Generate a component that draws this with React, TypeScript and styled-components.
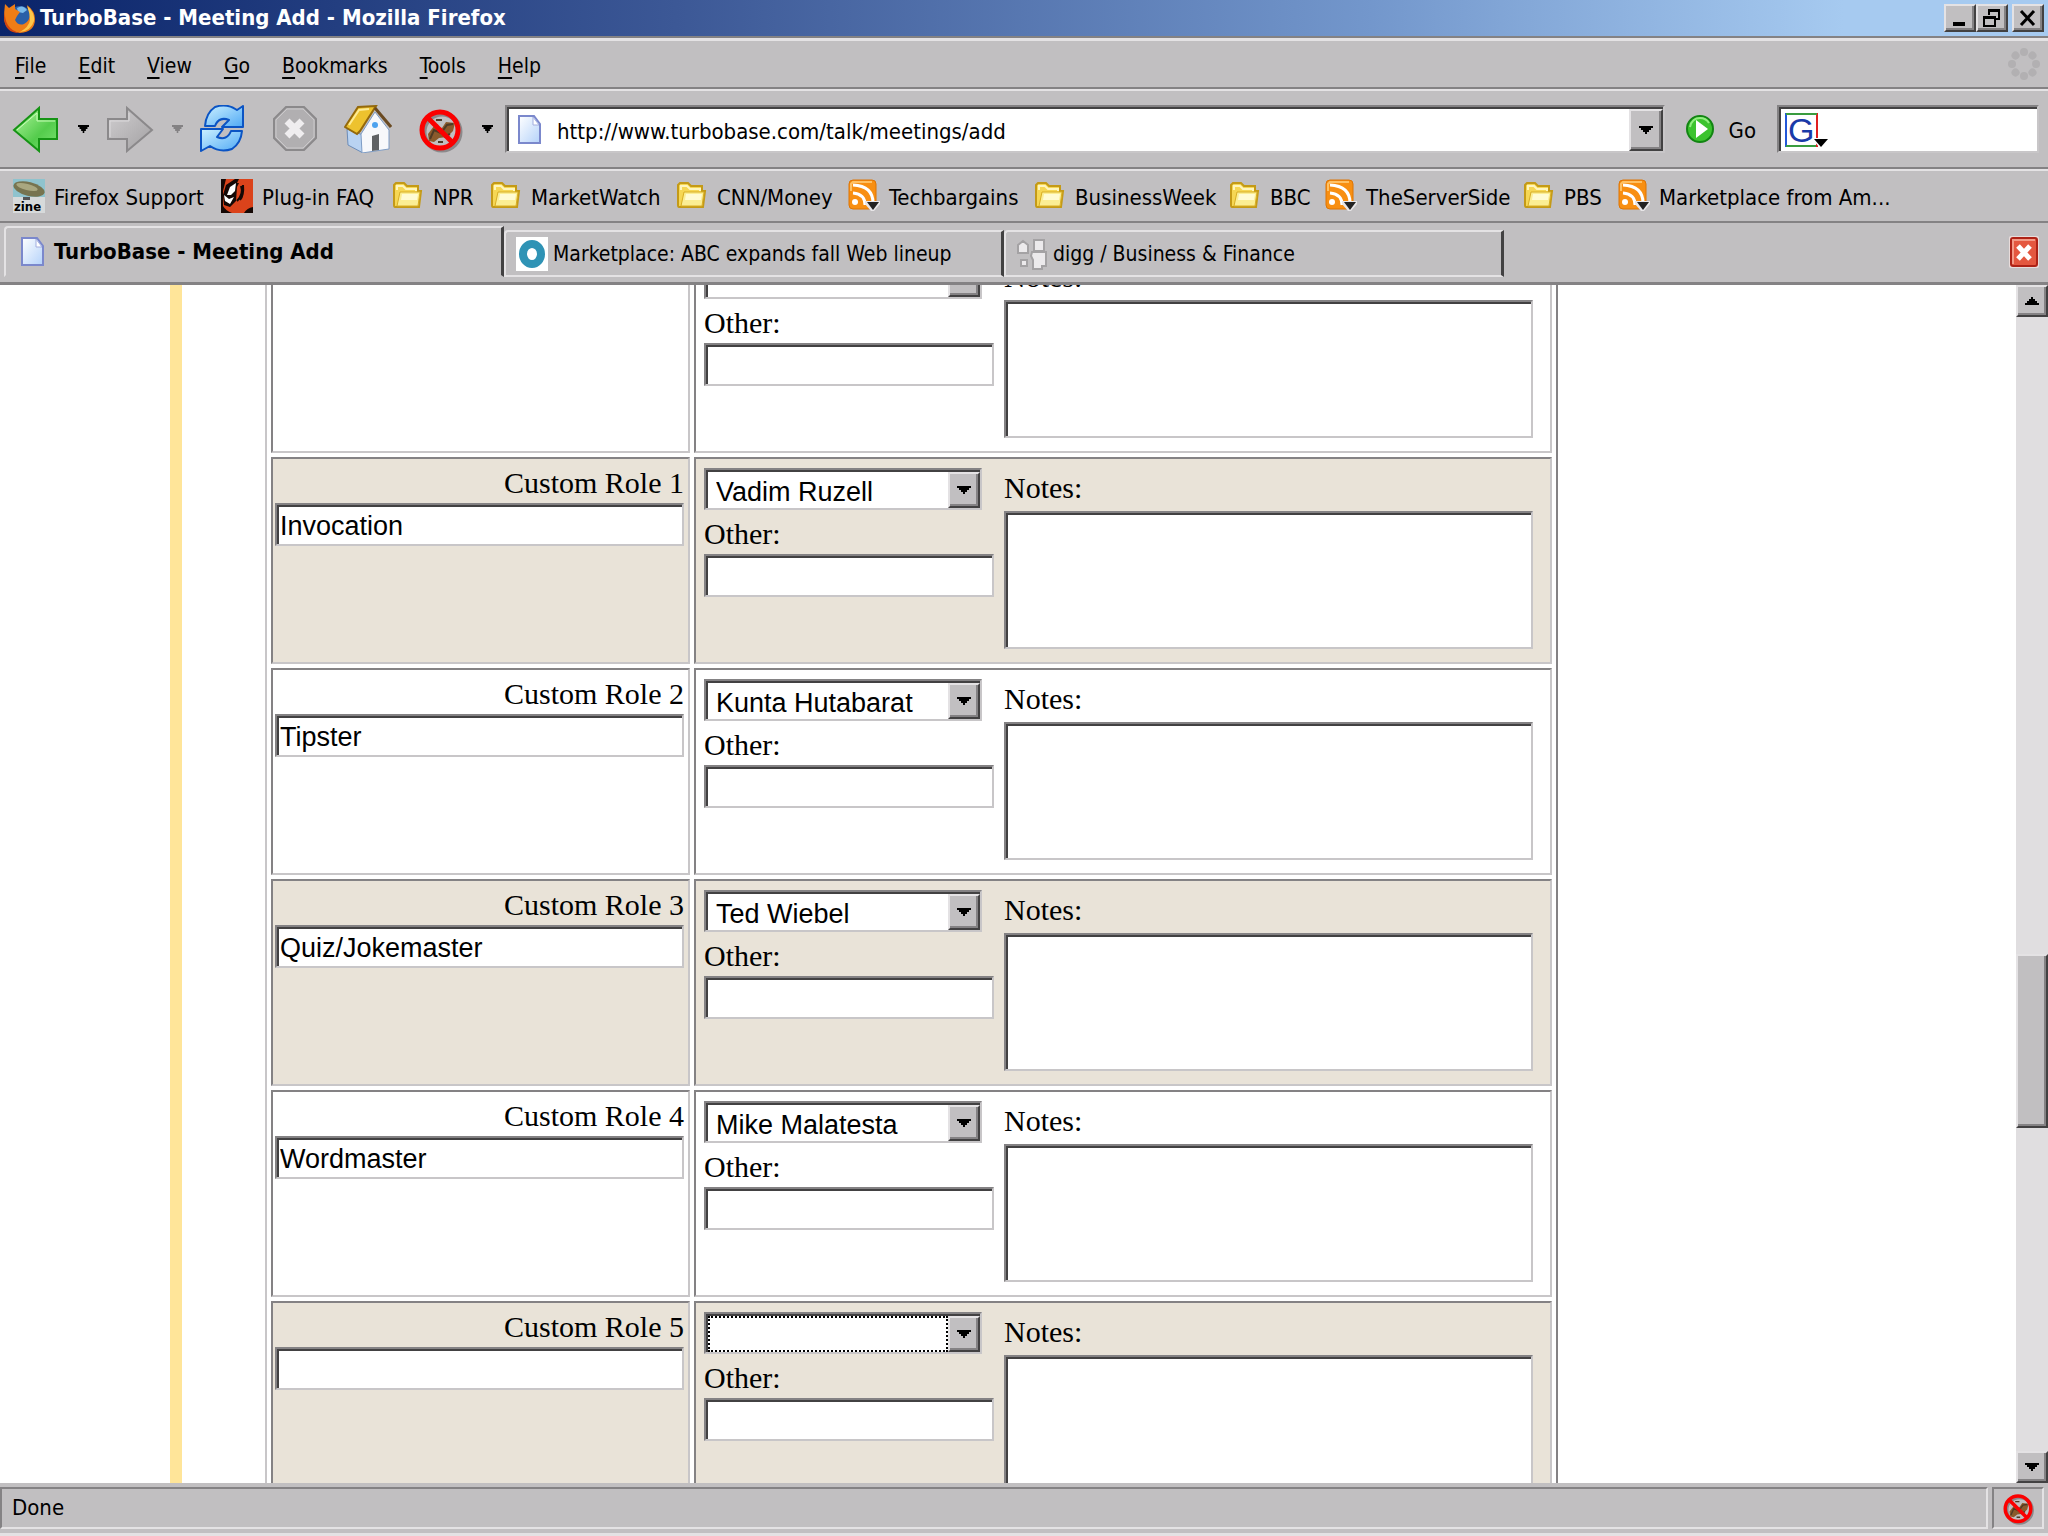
import React from "react";
import styled, { createGlobalStyle, css } from "styled-components";

const chrome = "#c1bfc1";
const light = "#e4e2e4";
const mid = "#848284";
const dark = "#424142";
const soft = "#c8c6c8";
const uiFont = `"DejaVu Sans Condensed", "Noto Sans", sans-serif`;
const serif = `"Liberation Serif", serif`;
const sans = `"Liberation Sans", sans-serif`;

const GlobalStyle = createGlobalStyle`
  * { box-sizing: border-box; }
  body { margin: 0; background: #fff; color: #000; overflow: hidden; }
  button, input, select, textarea { font: inherit; color: inherit; margin: 0; border-radius: 0; outline: none; }
  button { padding: 0; border: 0; background: none; }
  svg { display: block; flex: none; }
`;

const sunken = css`
  border: 2px solid;
  border-color: ${mid} ${soft} ${soft} ${mid};
  box-shadow: inset 2px 2px 0 ${dark};
  background: #fff;
`;
const raised = css`
  background: ${chrome};
  border: 2px solid;
  border-color: ${light} ${dark} ${dark} ${light};
  box-shadow: inset -2px -2px 0 ${mid};
`;

const Window = styled.div`
  display: flex;
  flex-direction: column;
  height: 100vh;
  background: ${chrome};
  font: 22px/28px ${uiFont};
`;
const TitleBar = styled.header`
  display: flex;
  align-items: center;
  height: 36px;
  padding: 0 4px;
  color: #fff;
  background: linear-gradient(90deg, #0a246a, #3c5896 33%, #7397cc 67%, #a6caf0 90%);
`;
const Title = styled.h1`
  flex: 1;
  margin: 0 0 0 4px;
  font-size: 22px;
  line-height: 36px;
`;
const WindowButton = styled.button`
  ${raised}
  display: grid;
  place-items: center;
  width: 32px;
  height: 28px;
  &:last-child { margin-left: 4px; }
`;
const Strip = styled.div`
  display: flex;
  align-items: center;
  border-top: 2px solid ${light};
  border-bottom: 2px solid ${mid};
`;
const MenuBar = styled(Strip).attrs({ as: "nav" })`
  height: 51px;
  margin-top: 2px;
  padding: 0 8px 0 15px;
  gap: 32px;
  border-top: 3px solid ${light};
  box-shadow: 0 -2px 0 ${mid};
`;
const MenuItem = styled.button`
  padding-top: 4px;
  font-size: 21px;
  text-underline-offset: 4px;
`;
const Spacer = styled.span`
  flex: 1;
`;
const NavBar = styled(Strip)`
  height: 80px;
  padding: 0 9px 0 12px;
`;
const PairRow = styled.div`
  display: flex;
  gap: 5px;
  margin-right: 5px;
`;
const IconRow = styled.div`
  display: flex;
  gap: 24px;
`;
const Pair = styled.div`
  display: flex;
`;
const ArrowButton = styled.button`
  display: flex;
  align-items: center;
  width: 41px;
  padding-left: 18px;
`;
const AddressBox = styled.form`
  ${sunken}
  flex: 1;
  display: flex;
  align-items: center;
  height: 48px;
  padding: 2px 0 0 10px;
`;
const AddressInput = styled.input`
  flex: 1;
  min-width: 0;
  height: 40px;
  padding: 2px 0 0 14px;
  border: 0;
  background: none;
`;
const DropButton = styled.button`
  ${raised}
  display: grid;
  place-items: center;
  width: 34px;
  height: 42px;
`;
const GoButton = styled.button`
  display: flex;
  align-items: center;
  gap: 12px;
  margin: 0 21px 0 20px;
`;
const GoText = styled.span`
  padding-top: 4px;
`;
const SearchBox = styled.label`
  ${sunken}
  display: flex;
  align-items: center;
  width: 262px;
  height: 48px;
  padding: 2px 0 0 6px;
`;
const SearchInput = styled.input`
  flex: 1;
  min-width: 0;
  border: 0;
  background: none;
`;
const BookmarkBar = styled(Strip)`
  height: 54px;
  padding: 0 13px;
  gap: 17px;
`;
const Bookmark = styled.a`
  display: flex;
  align-items: center;
  gap: 9px;
  color: inherit;
  text-decoration: none;
  white-space: nowrap;
`;
const BookmarkText = styled.span<{ $w: number }>`
  width: ${(p) => p.$w}px;
  padding-top: 4px;
`;
const TabBar = styled.div`
  display: flex;
  align-items: stretch;
  height: 62px;
  padding: 3px 9px 5px 4px;
  border-bottom: 3px solid ${mid};
`;
const Tab = styled.button<{ $active?: boolean }>`
  display: flex;
  align-items: center;
  gap: ${(p) => (p.$active ? 8 : 5)}px;
  width: 500px;
  margin-top: ${(p) => (p.$active ? 0 : 4)}px;
  padding: 0 0 0 ${(p) => (p.$active ? 14 : 10)}px;
  font-size: ${(p) => (p.$active ? 22 : 21)}px;
  font-weight: ${(p) => (p.$active ? 700 : 400)};
  text-align: left;
  white-space: nowrap;
  border-style: solid;
  border-width: 2px 3px 2px 2px;
  border-color: ${light} ${dark} ${(p) => (p.$active ? chrome : light)} ${light};
  border-top-left-radius: 4px;
`;
const CloseTab = styled.button`
  align-self: center;
`;
const Viewport = styled.div`
  flex: 1;
  min-height: 0;
  display: flex;
  background: #fff;
`;
const Page = styled.main`
  flex: 1;
  min-width: 0;
  overflow: hidden;
  margin-left: 170px;
  padding: 0 458px 0 83px;
  border-left: 12px solid #ffe599;
  font: 30px/40px ${serif};
`;
const RoleTable = styled.table`
  width: 100%;
  margin-top: -45px;
  table-layout: fixed;
  border-collapse: separate;
  border-spacing: 4px;
  border: 2px solid;
  border-color: ${soft} ${mid} ${mid} ${soft};
`;
const NameCol = styled.col`
  width: 419px;
`;
const Cell = styled.td<{ $pad: string; $shade: boolean }>`
  height: 207px;
  padding: ${(p) => p.$pad};
  vertical-align: top;
  border: 2px solid;
  border-color: ${mid} ${soft} ${soft} ${mid};
  background: ${(p) => (p.$shade ? "#e9e3d8" : "#fff")};
`;
const RoleLabel = styled.label`
  display: block;
  text-align: right;
`;
const Label = styled.label`
  display: block;
`;
const TextInput = styled.input`
  ${sunken}
  display: block;
  width: 100%;
  height: 43px;
  padding: 4px 0 0 3px;
  font: 27px/32px ${sans};
`;
const Fields = styled.div`
  display: flex;
  gap: 10px;
`;
const Person = styled.div`
  width: 290px;
`;
const SelectBox = styled.div`
  ${sunken}
  display: flex;
  width: 278px;
  height: 42px;
  margin-bottom: 4px;
  padding: 2px 0 0 2px;
`;
const Select = styled.select<{ $focused: boolean }>`
  flex: 1;
  min-width: 0;
  appearance: none;
  padding: 2px 0 0 6px;
  border: 2px ${(p) => (p.$focused ? "dotted #000" : "solid transparent")};
  background: none;
  font: 27px/32px ${sans};
`;
const SelectArrow = styled.span`
  ${raised}
  display: grid;
  place-items: center;
  width: 32px;
`;
const Notes = styled.div`
  flex: 1;
`;
const NotesArea = styled.textarea`
  ${sunken}
  display: block;
  width: 100%;
  height: 138px;
  margin-top: 3px;
  resize: none;
  font: 27px/32px ${sans};
`;
const ScrollBar = styled.div`
  display: flex;
  flex-direction: column;
  width: 32px;
  background: #e0dee0;
`;
const ScrollButton = styled.button`
  ${raised}
  display: grid;
  place-items: center;
  height: 32px;
`;
const ScrollThumb = styled.div`
  ${raised}
  height: 174px;
`;
const ScrollGap = styled.div<{ $grow: number }>`
  flex: ${(p) => p.$grow} 1 0;
`;
const StatusBar = styled.footer`
  display: flex;
  gap: 4px;
  height: 53px;
  padding: 4px 4px 4px 0;
  border-bottom: 3px solid ${light};
`;
const StatusPane = styled.div<{ $grow?: boolean }>`
  display: grid;
  align-items: center;
  justify-items: ${(p) => (p.$grow ? "start" : "center")};
  flex: ${(p) => (p.$grow ? "1" : "0 0 52px")};
  padding-left: ${(p) => (p.$grow ? 10 : 0)}px;
  border: 2px solid;
  border-color: ${mid} ${light} ${light} ${mid};
`;

const Down = ({ w = 14, color = "#000" }: { w?: number; color?: string }) => (
  <svg width={w} height="8" viewBox="0 0 14 8" preserveAspectRatio="none"><path d="M0 0h14v2h-2v2h-2v2H8v2H6V6H4V4H2V2H0z" fill={color} /></svg>
);
const Up = () => (
  <svg width="14" height="8" viewBox="0 0 14 8"><path d="M0 8h14V6h-2V4h-2V2H8V0H6v2H4v2H2v2H0z" /></svg>
);

const FirefoxLogo = () => (
  <svg width="32" height="32" viewBox="0 0 32 32">
    <circle cx="16" cy="15" r="11" fill="#2a5fa8" />
    <path d="M13 6q6-4 10 2l-4 3-5-1z" fill="#79b9ea" />
    <path d="M1 2l4 4 6-4 0 5 5 3-3 4-2 4q3 6 9 4 6-3 6-10l-3-9q8 6 8 14 0 13-15 14Q1 29 0 16q0-6 1-14z" fill="#ef7d16" />
    <path d="M23 4q8 6 7 15-3 10-14 11 9-5 10-12 0-7-3-14z" fill="#fdc64a" />
    <path d="M1 10q-1 16 14 21Q1 31 0 16z" fill="#d1440f" />
  </svg>
);
const Throbber = () => (
  <svg width="32" height="34" viewBox="0 0 32 34" fill="#b2b0b2">
    {[0, 45, 90, 135, 180, 225, 270, 315].map((a) => (
      <circle key={a} cx="16" cy="5" r="4" transform={`rotate(${a} 16 17)`} />
    ))}
  </svg>
);
const BackIcon = () => (
  <svg width="48" height="48" viewBox="0 0 48 48">
    <defs><linearGradient id="bk" x2="1" y2="1"><stop offset="0" stopColor="#b4f7a0" /><stop offset=".6" stopColor="#54cc4c" /><stop offset="1" stopColor="#7be573" /></linearGradient></defs>
    <path d="M2 25L27 3v11h18v20H27v12z" fill="url(#bk)" stroke="#159414" strokeWidth="2" />
    <path d="M5 25L25 8v8h18" fill="none" stroke="#c8ffb8" strokeWidth="1" />
  </svg>
);
const ForwardIcon = () => (
  <svg width="48" height="48" viewBox="0 0 48 48">
    <defs><linearGradient id="fw" x2="1" y2="1"><stop offset="0" stopColor="#d0ced0" /><stop offset="1" stopColor="#a3a1a3" /></linearGradient></defs>
    <path d="M46 25L21 3v11H2v20h19v12z" fill="url(#fw)" stroke="#8b898b" strokeWidth="2" />
    <path d="M4 32V16h19V8" fill="none" stroke="#dcdadc" />
  </svg>
);
const ReloadIcon = () => (
  <svg width="48" height="48" viewBox="0 0 48 48" stroke="#0b54c4" strokeWidth="2" strokeLinejoin="round">
    <defs><linearGradient id="rl" x2="1" y2="1"><stop offset="0" stopColor="#cdf1ff" /><stop offset="1" stopColor="#4fa9f5" /></linearGradient></defs>
    <path d="M5 21Q6 8 15 2q12-4 22 3l6-4v21H22l7-7q-10-4-14 6z" fill="url(#rl)" />
    <path d="M42 26q-1 12-10 18-12 4-22-3l-9 5V24h22l-6 8q10 4 14-6z" fill="url(#rl)" />
  </svg>
);
const StopIcon = () => (
  <svg width="48" height="48" viewBox="0 0 48 48">
    <path d="M14 2h18l12 12v19L32 45H14L2 33V14z" fill="#b1afb1" stroke="#8b898b" strokeWidth="2" />
    <path d="M15 4h16l11 11v17L31 43H15L4 32V15z" fill="none" stroke="#cbc9cb" />
    <path d="M15 16l15 15M30 16L15 31" stroke="#efedef" strokeWidth="7" />
  </svg>
);
const HomeIcon = () => (
  <svg width="48" height="48" viewBox="0 0 48 48">
    <path d="M3 24l16 6v18L4 40z" fill="#b9d3f2" stroke="#6c8cb8" />
    <path d="M17 29L31 7l14 18v19l-27 4z" fill="#f7f8fb" stroke="#7e9cc4" />
    <path d="M1 22L14 2l18-1-16 25-3 3z" fill="#edc22e" stroke="#94690c" strokeWidth="2" />
    <path d="M5 20L15 5l10-1" fill="none" stroke="#fdeb96" strokeWidth="2" />
    <path d="M31 3l16 19" stroke="#6a4a22" strokeWidth="3" />
    <path d="M28 31l7-2v16l-7 1z" fill="#5f6164" />
    <circle cx="31" cy="20" r="3" fill="#4da2ee" />
  </svg>
);
const NoBugIcon = ({ size }: { size: number }) => (
  <svg width={size} height={size} viewBox="0 0 48 48">
    <circle cx="26" cy="27" r="18" fill="none" stroke="#8b898b" strokeWidth="5" />
    <path d="M12 29l6-8 8 2 4-6 9 1-2 8-6 6-8 1-5 4-5-1z" fill="#8a5a2c" />
    <path d="M14 34l4-9 7 3 6-8 6-1M16 18l6 3M34 29l-6 3M20 15h6M22 37h5" fill="none" stroke="#4e3a25" strokeWidth="2" />
    <circle cx="24" cy="25" r="18" fill="none" stroke="#fb0000" strokeWidth="5" />
    <path d="M11 12l26 26" stroke="#fb0000" strokeWidth="5" />
  </svg>
);
const PageIcon = () => (
  <svg width="26" height="32" viewBox="0 0 26 32">
    <defs><linearGradient id="pg" x2="1" y2="1"><stop offset="0" stopColor="#fff" /><stop offset="1" stopColor="#b4d2fa" /></linearGradient></defs>
    <path d="M2 2h15l6 8v19H2z" fill="url(#pg)" stroke="#7b88cc" strokeWidth="2" />
    <path d="M16 3v8h6z" fill="#fff" stroke="#a3aede" />
  </svg>
);
const FolderIcon = () => (
  <svg width="32" height="32" viewBox="0 0 32 32">
    <path d="M2 5l2-2h8l3 3h11v5h3l-2 16H3q-1 0-1-2z" fill="#f6d754" stroke="#c49a17" strokeWidth="2" />
    <path d="M5 10V6h6l3 3h10v2" fill="none" stroke="#fff6bd" strokeWidth="2" />
    <path d="M8 12h20l-2 14H5z" fill="#fbee94" stroke="#d8ae24" strokeWidth="1" />
    <path d="M10 14h16l-1 6H9z" fill="#fffbd2" />
  </svg>
);
const RssIcon = () => (
  <svg width="32" height="34" viewBox="0 0 32 34">
    <rect x="1" y="1" width="27" height="29" rx="4" fill="#f88f12" stroke="#dd7404" />
    <path d="M3 12V5l2-2h19" fill="none" stroke="#ffc164" strokeWidth="2" />
    <circle cx="7" cy="23" r="3" fill="#fff" />
    <path d="M5 14q12 1 12 12M5 6q20 1 20 18" fill="none" stroke="#fff" strokeWidth="3" />
    <path d="M17 22h15v3l-6 7h-3l-6-7z" fill="#e8e6e8" />
    <path d="M19 23h12l-6 8z" fill="#222" />
  </svg>
);
const ZineIcon = () => (
  <svg width="32" height="34" viewBox="0 0 32 34">
    <path fill="#d7dadb" d="M0 0h32v34H0z" /><path fill="#8fc3ce" d="M0 0h32v18H0z" />
    <ellipse cx="16" cy="10" rx="16" ry="7" fill="#777450" transform="rotate(14 16 10)" />
    <ellipse cx="14" cy="8" rx="11" ry="3" fill="#a9a780" transform="rotate(14 14 8)" />
    <path d="M10 18h7v3h-7z" fill="#555" />
    <text x="1" y="32" fontFamily="DejaVu Sans Condensed" fontWeight="700" fontSize="13">zine</text>
  </svg>
);
const PluginIcon = () => (
  <svg width="32" height="34" viewBox="0 0 32 34">
    <path fill="#db431b" d="M0 0h32v34H0z" />
    <path d="M0 0h14L5 6 2 16l1 10 6 2 6-6 1-14 2-4-2 0 2-4H0z" fill="#150805" />
    <path d="M0 0h5L2 12v22H0z" fill="#150805" />
    <path d="M9 8l6-4-1 8-4 4-4 0zM3 16l5 4 5-2-4 7-5-3z" fill="#fff" />
    <path d="M20 7q3 8-4 15M22 6q1 10-3 15" fill="none" stroke="#150805" strokeWidth="2" />
    <path d="M23 34q3-5 9-6v6zM2 27q3 5 9 7H2z" fill="#150805" />
  </svg>
);
const RingIcon = () => (
  <svg width="32" height="34" viewBox="0 0 32 34">
    <path fill="#fff" d="M0 0h32v34H0z" />
    <ellipse cx="16" cy="17" rx="9" ry="10" fill="none" stroke="#2f93b5" strokeWidth="8" />
  </svg>
);
const DiggIcon = () => (
  <svg width="32" height="32" viewBox="0 0 32 32" fill="#eceaec" stroke="#a4a2a4" strokeWidth="2">
    <path d="M2 15V7l5-4 5 4v8zM18 2h10v11H18zM16 14h14v14h-4v3h-9v-9l-2-4zM5 22h6v6H5z" />
  </svg>
);
const GoIcon = () => (
  <svg width="32" height="32" viewBox="0 0 32 32">
    <circle cx="15" cy="16" r="13" fill="#3cc32e" stroke="#128512" strokeWidth="2" />
    <path d="M5 14q2-9 10-9 6 0 9 5" fill="none" stroke="#92ee80" strokeWidth="2" />
    <path d="M11 7v18l12-9z" fill="#fff" />
  </svg>
);
const GoogleIcon = () => (
  <svg width="44" height="34" viewBox="0 0 44 34">
    <path d="M1 0v34" stroke="#2458d8" strokeWidth="2" />
    <path d="M32 0v34" stroke="#e02020" strokeWidth="2" />
    <path d="M1 1h31M1 33h30" stroke="#3a9c3f" strokeWidth="2" />
    <text x="3" y="29" fontFamily="Liberation Sans" fontSize="34" fill="#1a3aa8">G</text>
    <path d="M28 25h14v2l-5 7h-3l-6-7z" fill="#fff" />
    <path d="M29 26h14l-7 8z" />
  </svg>
);
const CloseIcon = () => (
  <svg width="30" height="32" viewBox="0 0 30 32">
    <rect x="0" y="0" width="30" height="32" rx="2" fill="#e8dcdb" />
    <rect x="2" y="2" width="26" height="28" rx="2" fill="#e4573f" stroke="#ae2216" strokeWidth="2" />
    <path d="M4 28V4h22" fill="none" stroke="#f39a86" strokeWidth="2" />
    <path d="M9 10l12 13M21 10L9 23" stroke="#fff" strokeWidth="5" />
  </svg>
);

const menus = ["File", "Edit", "View", "Go", "Bookmarks", "Tools", "Help"];
const bookmarks: { icon: React.ReactNode; text: string; w: number }[] = [
  { icon: <ZineIcon />, text: "Firefox Support", w: 150 },
  { icon: <PluginIcon />, text: "Plug-in FAQ", w: 113 },
  { icon: <FolderIcon />, text: "NPR", w: 40 },
  { icon: <FolderIcon />, text: "MarketWatch", w: 128 },
  { icon: <FolderIcon />, text: "CNN/Money", w: 114 },
  { icon: <RssIcon />, text: "Techbargains", w: 128 },
  { icon: <FolderIcon />, text: "BusinessWeek", w: 137 },
  { icon: <FolderIcon />, text: "BBC", w: 38 },
  { icon: <RssIcon />, text: "TheServerSide", w: 140 },
  { icon: <FolderIcon />, text: "PBS", w: 37 },
  { icon: <RssIcon />, text: "Marketplace from Am...", w: 230 },
];
const roles = [
  { id: 0, title: "", name: "", person: "" },
  { id: 1, title: "Custom Role 1", name: "Invocation", person: "Vadim Ruzell" },
  { id: 2, title: "Custom Role 2", name: "Tipster", person: "Kunta Hutabarat" },
  { id: 3, title: "Custom Role 3", name: "Quiz/Jokemaster", person: "Ted Wiebel" },
  { id: 4, title: "Custom Role 4", name: "Wordmaster", person: "Mike Malatesta" },
  { id: 5, title: "Custom Role 5", name: "", person: "" },
];

const RoleRow = ({ id, title, name, person }: (typeof roles)[number]) => {
  const shade = id % 2 === 1;
  return (
    <tr>
      <Cell $pad="4px 4px 2px 2px" $shade={shade}>
        {title && (
          <>
            <RoleLabel htmlFor={`role${id}`}>{title}</RoleLabel>
            <TextInput id={`role${id}`} defaultValue={name} />
          </>
        )}
      </Cell>
      <Cell $pad="9px 17px 12px 8px" $shade={shade}>
        <Fields>
          <Person>
            <SelectBox>
              <Select aria-label={`${title} member`} $focused={id === 5} defaultValue={person}>
                <option>{person}</option>
              </Select>
              <SelectArrow aria-hidden="true"><Down /></SelectArrow>
            </SelectBox>
            <Label htmlFor={`other${id}`}>Other:</Label>
            <TextInput id={`other${id}`} />
          </Person>
          <Notes>
            <Label htmlFor={`notes${id}`}>Notes:</Label>
            <NotesArea id={`notes${id}`} />
          </Notes>
        </Fields>
      </Cell>
    </tr>
  );
};

export default function App() {
  return (
    <Window>
      <GlobalStyle />
      <TitleBar>
        <FirefoxLogo />
        <Title>TurboBase - Meeting Add - Mozilla Firefox</Title>
        <WindowButton aria-label="Minimize"><svg width="20" height="18"><path d="M3 13h12v4H3z" /></svg></WindowButton>
        <WindowButton aria-label="Restore"><svg width="20" height="20" fill="none" stroke="#000" strokeWidth="2"><path d="M7 7V2h10v9h-4M6 3h12M2 9h11v9H2zM2 10h11" /></svg></WindowButton>
        <WindowButton aria-label="Close"><svg width="20" height="18" stroke="#000" strokeWidth="3"><path d="M3 2l13 14M16 2L3 16" /></svg></WindowButton>
      </TitleBar>
      <MenuBar>
        {menus.map((m) => (
          <MenuItem key={m}><u>{m[0]}</u>{m.slice(1)}</MenuItem>
        ))}
        <Spacer />
        <Throbber />
      </MenuBar>
      <NavBar>
        <PairRow>
          <Pair><button aria-label="Back"><BackIcon /></button><ArrowButton aria-label="Back history"><Down w={11} /></ArrowButton></Pair>
          <Pair><button aria-label="Forward"><ForwardIcon /></button><ArrowButton aria-label="Forward history"><Down w={11} color="#848284" /></ArrowButton></Pair>
        </PairRow>
        <IconRow>
          <button aria-label="Reload"><ReloadIcon /></button>
          <button aria-label="Stop"><StopIcon /></button>
          <button aria-label="Home"><HomeIcon /></button>
          <Pair><button aria-label="Debug"><NoBugIcon size={48} /></button><ArrowButton aria-label="Debug options"><Down w={11} /></ArrowButton></Pair>
        </IconRow>
        <AddressBox>
          <PageIcon />
          <AddressInput aria-label="Address" defaultValue="http://www.turbobase.com/talk/meetings/add" />
          <DropButton type="button" aria-label="Show history"><Down /></DropButton>
        </AddressBox>
        <GoButton><GoIcon /><GoText>Go</GoText></GoButton>
        <SearchBox><GoogleIcon /><SearchInput aria-label="Search" /></SearchBox>
      </NavBar>
      <BookmarkBar>
        {bookmarks.map((b) => (
          <Bookmark key={b.text} href="#">{b.icon}<BookmarkText $w={b.w}>{b.text}</BookmarkText></Bookmark>
        ))}
      </BookmarkBar>
      <TabBar>
        <Tab $active><PageIcon />TurboBase - Meeting Add</Tab>
        <Tab><RingIcon />Marketplace: ABC expands fall Web lineup</Tab>
        <Tab><DiggIcon />digg / Business &amp; Finance</Tab>
        <Spacer />
        <CloseTab aria-label="Close tab"><CloseIcon /></CloseTab>
      </TabBar>
      <Viewport>
        <Page>
          <RoleTable>
            <colgroup><NameCol /><col /></colgroup>
            <tbody>{roles.map((r) => <RoleRow key={r.id} {...r} />)}</tbody>
          </RoleTable>
        </Page>
        <ScrollBar>
          <ScrollButton aria-label="Scroll up"><Up /></ScrollButton>
          <ScrollGap $grow={637} />
          <ScrollThumb />
          <ScrollGap $grow={323} />
          <ScrollButton aria-label="Scroll down"><Down /></ScrollButton>
        </ScrollBar>
      </Viewport>
      <StatusBar>
        <StatusPane $grow>Done</StatusPane>
        <StatusPane><NoBugIcon size={34} /></StatusPane>
      </StatusBar>
    </Window>
  );
}
